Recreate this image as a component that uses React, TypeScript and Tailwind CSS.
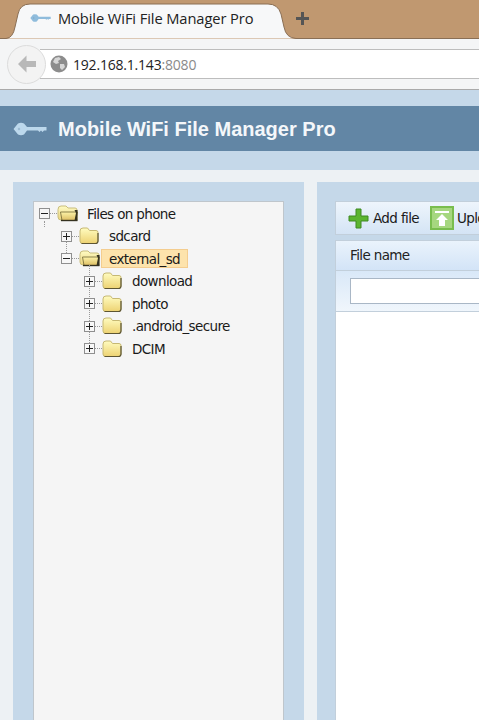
const tabFont = "font-['Open_Sans','Noto_Sans',sans-serif]"
const treeFont = "font-['DejaVu_Sans',sans-serif]"

function KeyIcon({ className, fill }: { className: string; fill: string }) {
	return (
		<svg className={className} viewBox="0 0 34 14" fill="none">
			<path d="M0.5 7 L5 1.5 Q8 0 11 1.5 L14 5 H33.5 V8.5 H31 L29.5 10 L28 8.5 L26.5 10 L25 8.5 H14 L11 12.5 Q8 14 5 12.5 Z" fill={fill} />
			<circle cx="6" cy="7" r="1.2" fill="#6286a5" opacity="0.35" />
		</svg>
	)
}

function Folder({ open }: { open?: boolean }) {
	if (open) {
		return (
			<svg width="22" height="17" viewBox="0 0 22 17" className="shrink-0">
				<defs>
					<linearGradient id="open-back" x1="0" y1="0" x2="0" y2="1">
						<stop offset="0" stopColor="#fffcc4" />
						<stop offset="1" stopColor="#ead27a" />
					</linearGradient>
					<linearGradient id="open-front" x1="0" y1="0" x2="0" y2="1">
						<stop offset="0" stopColor="#fdf3a8" />
						<stop offset="1" stopColor="#dcbd62" />
					</linearGradient>
				</defs>
				<path d="M1 4.5 Q1 1 4 1 H9 L11 3 H18 Q20 3 20 5 V15 H4 Q1 15 1 12 Z" fill="url(#open-back)" stroke="#c9bd7c" />
				<path d="M3.5 7 H20.5 L18.5 15.5 H5 Z" fill="url(#open-front)" stroke="#6f6534" strokeWidth="0.8" />
				<path d="M17.5 5 H20.5 V15.5 H17.5 L19 8 Z" fill="#35321f" />
				<path d="M4 15.5 H20.5" stroke="#35321f" strokeWidth="1.4" />
			</svg>
		)
	}
	return (
		<svg width="20" height="18" viewBox="0 0 20 18" className="shrink-0">
			<defs>
				<linearGradient id="closed-body" x1="0" y1="0" x2="0" y2="1">
					<stop offset="0" stopColor="#fffcc0" />
					<stop offset="1" stopColor="#edd272" />
				</linearGradient>
			</defs>
			<path d="M1 4 Q1 1 4 1 H8.5 L10.5 3.5 H17 Q19 3.5 19 5.5 V14 Q19 16.5 16.5 16.5 H3.5 Q1 16.5 1 14 Z" fill="url(#closed-body)" stroke="#c6b873" />
			<path d="M2.5 16.5 H16.5 Q19 16.5 19 14 V6" fill="none" stroke="#5d5532" strokeWidth="1.2" />
		</svg>
	)
}

function Toggle({ open }: { open?: boolean }) {
	return (
		<span className="relative z-10 flex h-[11px] w-[11px] shrink-0 items-center justify-center border border-[#8f8f8f] bg-[#f7f7f7]">
			<span className="absolute h-px w-[7px] bg-[#222]" />
			{!open && <span className="absolute h-[7px] w-px bg-[#222]" />}
		</span>
	)
}

type Node = { label: string; depth: number; open?: boolean; selected?: boolean }

const nodes: Node[] = [
	{ label: 'Files on phone', depth: 0, open: true },
	{ label: 'sdcard', depth: 1 },
	{ label: 'external_sd', depth: 1, open: true, selected: true },
	{ label: 'download', depth: 2 },
	{ label: 'photo', depth: 2 },
	{ label: '.android_secure', depth: 2 },
	{ label: 'DCIM', depth: 2 },
]

const depthPad = ['pl-[5px]', 'pl-[27px]', 'pl-[50px]']

function TreeRow({ label, depth, open, selected }: Node) {
	return (
		<div className={`flex h-[22.5px] items-center ${depthPad[depth]}`}>
			<Toggle open={open} />
			<span className="w-[7px] shrink-0 border-t border-dotted border-[#999]" />
			<span className="flex w-[22px] shrink-0 items-center">
				<Folder open={open} />
			</span>
			<span
				className={`flex h-[19px] items-center px-[7px] text-[13.5px] tracking-[-0.63px] text-[#1a1a1a] ${
					selected ? 'border border-[#f4cd8f] bg-[#fde3ac]' : 'border border-transparent'
				}`}
			>
				{label}
			</span>
		</div>
	)
}

export default function App() {
	return (
		<div className="flex h-[720px] w-[479px] flex-col overflow-hidden bg-[#edf1f4]">
			{/* browser chrome */}
			<div className="relative h-[39px] shrink-0 bg-[#c09870]">
				<svg className="absolute left-0 top-0" width="479" height="39" viewBox="0 0 479 39">
					<path
						d="M0 38.5 H6 Q13 38 15 27 L18 14 Q20 4 30 4 H268 Q278 4 281 14 L284 27 Q286 38 296 38.5 H479"
						fill="#f7f8f9"
						stroke="#8a6f55"
						strokeWidth="1"
					/>
				</svg>
				<div className={`relative flex h-full items-center pb-[3px] pl-[30px] ${tabFont}`}>
					<KeyIcon className="h-[10px] w-[21px]" fill="#8fbcdc" />
					<span className="ml-[7px] text-[14.7px] tracking-[-0.1px] text-[#222]">Mobile WiFi File Manager Pro</span>
					<svg width="13" height="13" viewBox="0 0 13 13" className="ml-[43px] shrink-0">
						<path d="M5 0 H8 V5 H13 V8 H8 V13 H5 V8 H0 V5 H5 Z" fill="#555555" />
					</svg>
				</div>
			</div>
			<div className="flex h-[51px] shrink-0 items-center border-b border-[#aaaaaa] bg-[#f4f5f6] pl-[7px]">
				<div className="relative z-10 flex h-[39px] w-[39px] shrink-0 items-center justify-center rounded-full border border-[#dcdcdc] bg-[#f3f3f3]">
					<svg width="20" height="18" viewBox="0 0 20 18">
						<path d="M9.5 0.5 L1 9 L9.5 17.5 V12 H19 V6 H9.5 Z" fill="#b8b8b8" />
					</svg>
				</div>
				<div className="-ml-[6px] flex h-[30px] grow items-center border-y border-[#bdbdbd] bg-white pl-[10px]">
					<svg width="18" height="18" viewBox="0 0 18 18" className="shrink-0">
						<circle cx="9" cy="9" r="8.5" fill="#8c8c8c" />
						<path d="M5 3 L9 2 L11 4 L8 6 L9 8 L6 9 L3 7 Z M10 9 L14 9 L15 12 L12 15 L10 13 Z" fill="#d6d6d6" />
					</svg>
					<span className={`ml-[5px] text-[14px] tracking-[-0.2px] text-[#222] ${tabFont}`}>
						192.168.1.143<span className="text-[#8a8a8a]">:8080</span>
					</span>
				</div>
			</div>

			{/* app header */}
			<div className="flex h-[80px] shrink-0 flex-col bg-[#c5d8e9] pt-[16px]">
				<div className="flex h-[45px] items-center bg-[#6286a5] pl-[13px]">
					<KeyIcon className="h-[14px] w-[34px]" fill="#bcd8ec" />
					<span className="ml-[11px] font-['Liberation_Sans',sans-serif] text-[20px] font-bold text-[#f4f7fa]">
						Mobile WiFi File Manager Pro
					</span>
				</div>
			</div>

			{/* panels */}
			<div className="flex grow gap-[13px] pl-[13px] pt-[12px]">
				<div className="w-[291px] shrink-0 bg-[#c5d8e9] px-[20px] pt-[19px]">
					<div className={`h-full border border-[#bfc6cc] bg-[#f5f5f5] pt-[0.6px] ${treeFont}`}>
						<div className="relative">
							{/* dotted guides */}
							<span className="absolute left-[10px] top-[18px] h-[6px] border-l border-dotted border-[#999]" />
							<span className="absolute left-[32px] top-[28px] h-[24px] border-l border-dotted border-[#999]" />
							<span className="absolute left-[55px] top-[62px] h-[82px] border-l border-dotted border-[#999]" />
							{nodes.map((node) => (
								<TreeRow key={node.label} {...node} />
							))}
						</div>
					</div>
				</div>
				<div className="min-w-0 grow overflow-hidden bg-[#c5d8e9] pl-[18px] pt-[19px]">
					<div className={`flex h-[34px] items-center whitespace-nowrap border border-r-0 border-[#c2cfdb] bg-gradient-to-b from-[#eef5fc] to-[#d4e4f5] pl-[12px] text-[13.5px] tracking-[-0.63px] text-[#1a1a1a] ${treeFont}`}>
						<svg width="21" height="21" viewBox="0 0 21 21" className="shrink-0">
							<path d="M8 1 H13 V8 H20 V13 H13 V20 H8 V13 H1 V8 H8 Z" fill="#5cb531" stroke="#3f8a22" />
						</svg>
						<span className="ml-[4px]">Add file</span>
						<svg width="24" height="24" viewBox="0 0 24 24" className="ml-[11px] shrink-0">
							<rect width="24" height="24" fill="#79bd4e" />
							<rect x="2" y="2" width="20" height="20" fill="#a6d77f" />
							<rect x="5" y="5" width="14" height="2" fill="#ffffff" />
							<path d="M12 8 L18 14 H15 V20 H9 V14 H6 Z" fill="#ffffff" />
						</svg>
						<span className="ml-[3px]">Upload</span>
					</div>
					<div className={`mt-[5px] flex h-[31px] items-center border border-r-0 border-[#c2cfdb] bg-gradient-to-b from-[#eaf3fc] to-[#d3e4f7] pl-[14px] text-[13.5px] tracking-[-0.63px] text-[#222] ${treeFont}`}>
						File name
					</div>
					<div className="flex h-[41px] items-center border-b border-l border-[#c2cfdb] bg-gradient-to-b from-[#d9e8f8] to-[#f0f6fc] pl-[14px]">
						<div className="h-[26px] grow border border-r-0 border-[#a9b7c6] bg-white" />
					</div>
					<div className="h-[420px] border-l border-[#c2cfdb] bg-white" />
				</div>
			</div>
		</div>
	)
}
